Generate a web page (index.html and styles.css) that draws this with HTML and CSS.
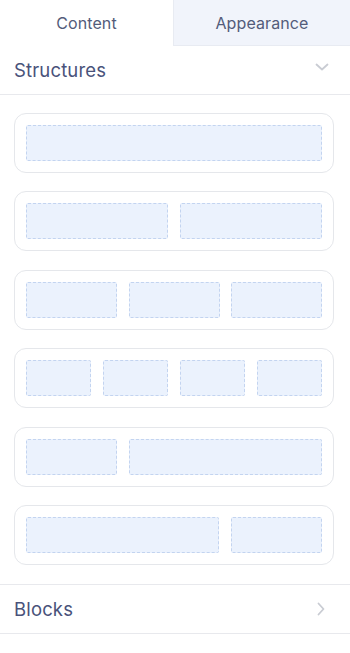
FILE: index.html
```html
<!DOCTYPE html>
<html>
<head>
<meta charset="utf-8">
<link rel="stylesheet" href="styles.css">
</head>
<body>
<div class="panel">
  <div class="tabs">
    <div class="tab active">Content</div>
    <div class="tab">Appearance</div>
  </div>
  <div class="section-head">
    <span class="title">Structures</span>
    <svg class="chev" width="16" height="16" viewBox="0 0 16 16"><path d="M2.5 5.5 L8 10.5 L13.5 5.5" fill="none" stroke="#c9ccd3" stroke-width="1.8" stroke-linecap="round" stroke-linejoin="round"/></svg>
  </div>
  <div class="structures">
    <div class="card c-1"><div class="col"></div></div>
    <div class="card c-2"><div class="col"></div><div class="col"></div></div>
    <div class="card c-3"><div class="col"></div><div class="col"></div><div class="col"></div></div>
    <div class="card c-4"><div class="col"></div><div class="col"></div><div class="col"></div><div class="col"></div></div>
    <div class="card c-12"><div class="col"></div><div class="col"></div></div>
    <div class="card c-21"><div class="col"></div><div class="col"></div></div>
  </div>
  <div class="section-head blocks">
    <span class="title">Blocks</span>
    <svg class="chev" width="16" height="16" viewBox="0 0 16 16"><path d="M5.5 2.5 L10.5 8 L5.5 13.5" fill="none" stroke="#c9ccd3" stroke-width="1.8" stroke-linecap="round" stroke-linejoin="round"/></svg>
  </div>
</div>
</body>
</html>
```
FILE: styles.css
```css
* { box-sizing: border-box; }
html, body { margin: 0; padding: 0; background: #fff; }
body { font-family: Inter, "Noto Sans", sans-serif; color: #4a5275; }
.panel { width: 350px; }
.tabs { display: grid; grid-template-columns: 173px 177px; height: 46px; }
.tab { display: flex; align-items: center; justify-content: center; font-size: 16px; letter-spacing: 0.1px; color: #535c7a; background: #f1f4fb; border-left: 1px solid #e8ebf2; border-bottom: 1px solid #e8ebf2; }
.tab.active { background: #fff; border: none; }
.section-head { display: flex; align-items: center; justify-content: space-between; height: 49px; padding: 0 20px 0 14px; border-bottom: 1px solid #e8e9ed; }
.section-head .title { font-size: 18.5px; letter-spacing: 0.15px; color: #49527a; }
.section-head .chev { margin-top: -6px; }
.section-head.blocks { height: 50px; border-top: 1px solid #e8e9ed; }
.section-head.blocks .chev { margin-top: 0; margin-right: 1px; }
.structures { display: flex; flex-direction: column; gap: 18.4px; padding: 18px 16px 19px 14px; }
.card { height: 60px; border: 1px solid #e5e7eb; border-radius: 12px; padding: 11px; display: grid; gap: 11.5px; }
.col { background: #ebf2fd; border: 1px dashed #c3d4f0; border-radius: 2px; height: 36px; }
.c-1 { grid-template-columns: 1fr; }
.c-2 { grid-template-columns: 1fr 1fr; }
.c-3 { grid-template-columns: 1fr 1fr 1fr; }
.c-4 { grid-template-columns: 1fr 1fr 1fr 1fr; }
.c-12 { grid-template-columns: 1fr 2.12fr; }
.c-21 { grid-template-columns: 2.12fr 1fr; }
```
